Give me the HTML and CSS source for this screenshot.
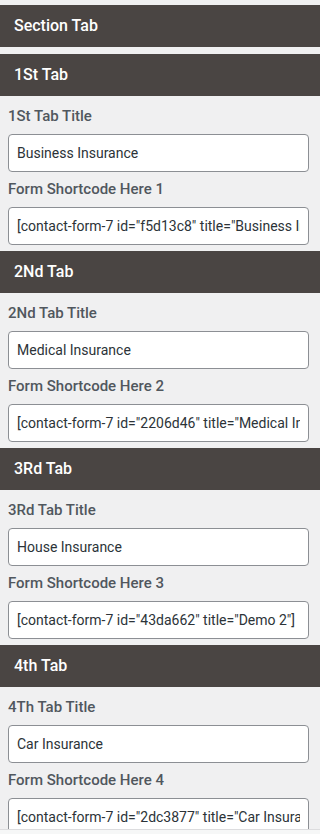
FILE: index.html
```html
<!DOCTYPE html>
<html>
<head>
<meta charset="utf-8">
<link rel="stylesheet" href="styles.css">
</head>
<body>
<div class="panel">
  <div class="section-head">Section Tab</div>

  <div class="tab">
    <div class="tab-head">1St Tab</div>
    <div class="tab-body">
      <label class="field-label">1St Tab Title</label>
      <input class="field" type="text" value="Business Insurance">
      <label class="field-label">Form Shortcode Here 1</label>
      <input class="field" type="text" value='[contact-form-7 id="f5d13c8" title="Business Insurance"]'>
    </div>
  </div>

  <div class="tab">
    <div class="tab-head">2Nd Tab</div>
    <div class="tab-body">
      <label class="field-label">2Nd Tab Title</label>
      <input class="field" type="text" value="Medical Insurance">
      <label class="field-label">Form Shortcode Here 2</label>
      <input class="field" type="text" value='[contact-form-7 id="2206d46" title="Medical Insurance"]'>
    </div>
  </div>

  <div class="tab">
    <div class="tab-head">3Rd Tab</div>
    <div class="tab-body">
      <label class="field-label">3Rd Tab Title</label>
      <input class="field" type="text" value="House Insurance">
      <label class="field-label">Form Shortcode Here 3</label>
      <input class="field" type="text" value='[contact-form-7 id="43da662" title="Demo 2"]'>
    </div>
  </div>

  <div class="tab">
    <div class="tab-head">4th Tab</div>
    <div class="tab-body">
      <label class="field-label">4Th Tab Title</label>
      <input class="field" type="text" value="Car Insurance">
      <label class="field-label">Form Shortcode Here 4</label>
      <input class="field" type="text" value='[contact-form-7 id="2dc3877" title="Car Insurance"]'>
    </div>
  </div>
</div>
<div class="footer"></div>
</body>
</html>
```
FILE: styles.css
```css
html, body {
  margin: 0;
  padding: 0;
}
body {
  background: #f0f0f1;
  font-family: Roboto, "Liberation Sans", sans-serif;
  overflow: hidden;
}
.panel {
  height: 829px;
  overflow: hidden;
  padding-top: 5px;
  box-sizing: border-box;
}
.section-head,
.tab-head {
  height: 42px;
  box-sizing: border-box;
  background: #4a4543;
  color: #ffffff;
  font-size: 16px;
  font-weight: 500;
  line-height: 42px;
  padding-left: 14px;
}
.section-head {
  margin-bottom: 7px;
}
.tab-body {
  padding: 10px 11px 6px 8px;
  display: flex;
  flex-direction: column;
}
.field-label {
  display: block;
  font-size: 15px;
  line-height: 20px;
  font-weight: 500;
  color: #50575e;
  margin-bottom: 8px;
}
.field {
  display: block;
  width: 100%;
  height: 38px;
  margin: 0;
  box-sizing: border-box;
  border: 1px solid #8c8f94;
  border-radius: 4px;
  background: #ffffff;
  color: #2c3338;
  font-family: Roboto, "Liberation Sans", sans-serif;
  font-size: 14px;
  line-height: 20px;
  padding: 8px 8px;
  outline: none;
}
.field + .field-label {
  margin-top: 7px;
}
.footer {
  height: 5px;
  border-top: 1px solid #dcdcde;
  background: #f6f7f7;
}
```
